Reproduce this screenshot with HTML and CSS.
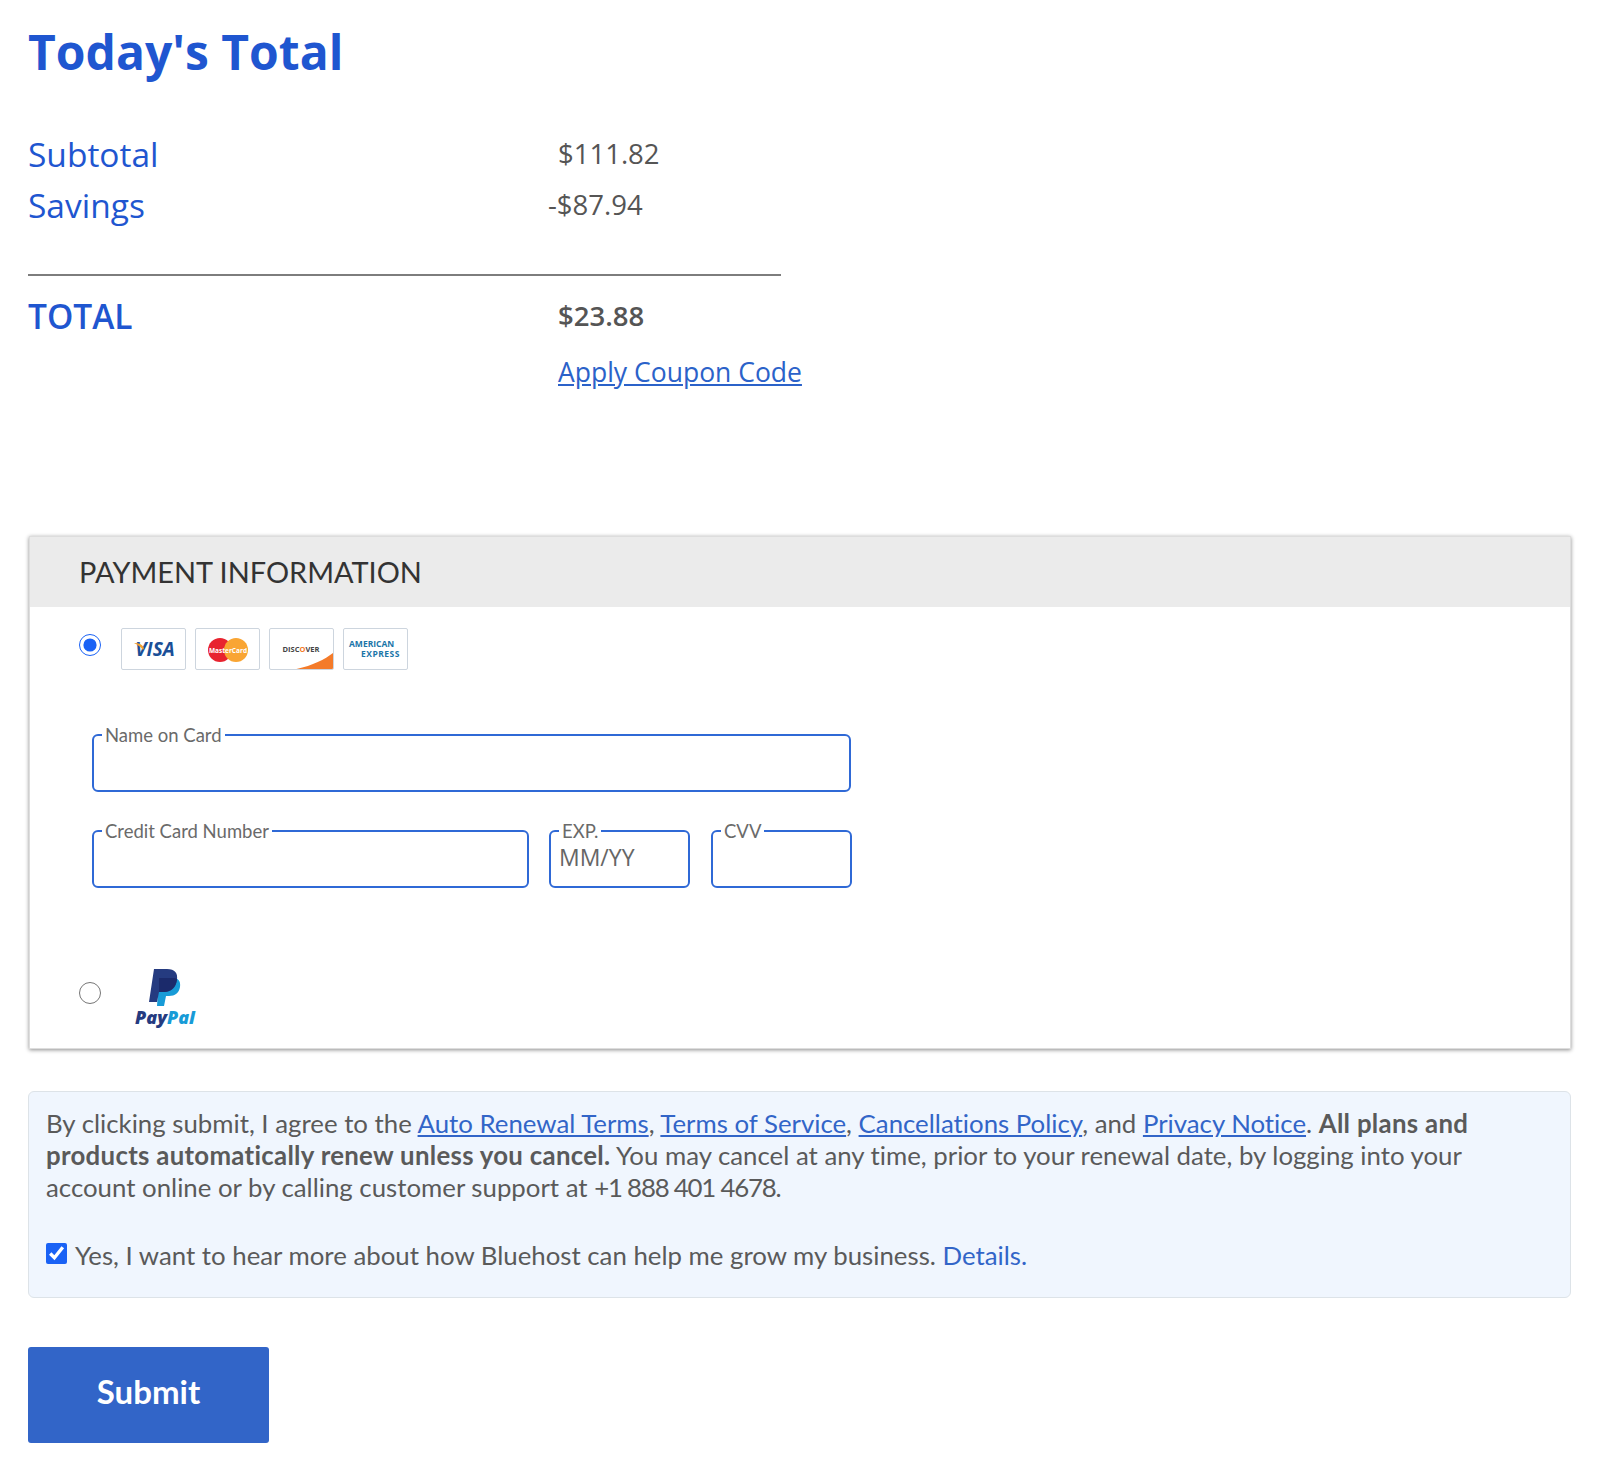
FILE: index.html
```html
<!DOCTYPE html>
<html>
	<head>
		<meta charset="utf-8">
		<title>Checkout</title>
		<link rel="stylesheet" href="styles.css">
	</head>
	<body>
		<div class="page">
			<h1 class="title">Today's Total</h1>
			<div class="totals">
				<div class="row">
					<span class="name">Subtotal</span>
					<span class="val">$111.82</span>
				</div>
				<div class="row">
					<span class="name">Savings</span>
					<span class="val neg">-$87.94</span>
				</div>
				<div class="line"></div>
				<div class="row">
					<span class="name strong">TOTAL</span>
					<span class="val strong-val">$23.88</span>
				</div>
				<div class="row coupon-row">
					<span class="name"></span>
					<a class="coupon" href="javascript:;">Apply Coupon Code</a>
				</div>
			</div>

			<div class="panel">
				<div class="panel-head">PAYMENT INFORMATION</div>
				<div class="method">
					<input class="radio" type="radio" name="pay" checked>
					<div class="cards">
						<div class="card">
							<svg viewBox="0 0 64 42" width="64" height="42">
								<text x="33" y="27" class="visa" text-anchor="middle">VISA</text>
								<path d="M12 14c5 0 8 1 10 5l-1 2c-2-3-5-5-9-7z" fill="#f0a030"/>
							</svg>
						</div>
						<div class="card">
							<svg viewBox="0 0 64 42" width="64" height="42">
								<circle cx="24" cy="21" r="12" fill="#e8232f"/>
								<circle cx="40" cy="21" r="12" fill="#f9a533"/>
								<text x="32" y="23.5" class="mc" text-anchor="middle">MasterCard</text>
							</svg>
						</div>
						<div class="card">
							<svg viewBox="0 0 64 42" width="64" height="42">
								<path d="M21 41C40 38 54 31 63 24v17z" fill="#f47b2a"/>
								<text x="31" y="23" class="disc" text-anchor="middle">DISC<tspan fill="#f47b2a">O</tspan>VER</text>
							</svg>
						</div>
						<div class="card">
							<svg viewBox="0 0 64 42" width="64" height="42">
								<text x="5" y="18" class="amex">AMERICAN</text>
								<text x="56" y="28" class="amex wide" text-anchor="end">EXPRESS</text>
							</svg>
						</div>
					</div>
				</div>

				<div class="fields">
					<fieldset class="field f-name">
						<legend>Name on Card</legend>
					</fieldset>
					<fieldset class="field f-num">
						<legend>Credit Card Number</legend>
					</fieldset>
					<fieldset class="field f-exp">
						<legend>EXP.</legend>
						<span class="ph">MM/YY</span>
					</fieldset>
					<fieldset class="field f-cvv">
						<legend>CVV</legend>
					</fieldset>
				</div>

				<div class="method paypal">
					<input class="radio off" type="radio" name="pay">
					<div class="pp">
						<svg viewBox="0 0 40 38" width="40" height="38">
							<path d="M14 9h14c5 0 8 3 7 9-1 6-5 9-11 9h-3l-2 10H12z" fill="#179bd7"/>
							<path d="M9 0h13c8 0 11 4 10 11-1 8-6 12-13 12h-5l-2 10H4z" fill="#253b80"/>
							<path d="M14 9h14c2 0 3 .5 4 1-1 8-6 13-13 13h-5z" fill="#1b2a6b"/>
						</svg>
						<span class="pp-word"><b>Pay</b><b class="pp-light">Pal</b></span>
					</div>
				</div>
			</div>

			<div class="notice">
				<p>By clicking submit, I agree to the <a href="javascript:;">Auto Renewal Terms</a>, <a href="javascript:;">Terms of Service</a>, <a href="javascript:;">Cancellations Policy</a>, and <a href="javascript:;">Privacy Notice</a>. <b>All plans and products automatically renew unless you cancel.</b> You may cancel at any time, prior to your renewal date, by logging into your account online or by calling customer support at <span class="phone">+1 888 401 4678</span>.</p>
				<label class="optin">
					<input type="checkbox" checked>
					<span>Yes, I want to hear more about how Bluehost can help me grow my business. <a class="plain" href="javascript:;">Details.</a></span>
				</label>
			</div>

			<button class="submit" type="button">Submit</button>
		</div>
	</body>
</html>
```

FILE: styles.css
```css
*{
	margin:0;
	padding:0;
	box-sizing:border-box;
}
body{
	background:#fff;
	color:#555;
	font-family:"Open Sans",sans-serif;
}
.page{
	padding:23px 29px 30px 28px;
}
.title{
	color:#1f56d0;
	font-size:48px;
	line-height:58px;
	font-weight:700;
}
.totals{
	margin-top:47px;
	width:800px;
}
.row{
	display:grid;
	grid-template-columns:530px 1fr;
	height:51px;
	align-items:center;
}
.name{
	color:#1f56d0;
	font-size:33.5px;
}
.strong{
	font-weight:600;
}
.val{
	font-size:27.5px;
	color:#555;
}
.neg{
	margin-left:-10px;
}
.strong-val{
	font-weight:600;
}
.line{
	width:753px;
	height:2px;
	background:#7d7d7d;
	margin:44px 0 14px;
}
.coupon-row{
	margin-top:5px;
}
.coupon{
	color:#2b62c9;
	font-size:26.5px;
}
.panel{
	margin-top:139px;
	margin-left:1px;
	border:1px solid #ddd;
	box-shadow:0 1px 4px rgba(0,0,0,.45);
	height:513px;
}
.panel-head{
	background:#ebebeb;
	height:70px;
	padding-left:49px;
	line-height:70px;
	font-family:Lato,sans-serif;
	font-size:28.9px;
	color:#333;
}
.method{
	display:flex;
	padding:21px 0 0 49px;
	gap:20px;
}
.radio{
	width:22px;
	height:22px;
	margin-top:6px;
	accent-color:#1a62f5;
}
.cards{
	display:flex;
	gap:9px;
}
.card{
	width:65px;
	height:42px;
	border:1px solid #cdd5de;
	border-radius:2px;
	background:#fff;
	overflow:hidden;
}
.card svg{
	display:block;
}
.visa{
	font:italic 700 19px "Open Sans",sans-serif;
	fill:#1a4f97;
}
.mc{
	font:700 6.5px "Open Sans",sans-serif;
	fill:#fff;
}
.disc{
	font:700 7.5px "Open Sans",sans-serif;
	fill:#444;
}
.amex{
	font:700 8.5px "Open Sans",sans-serif;
	fill:#1a75a8;
}
.wide{
	letter-spacing:.5px;
}
.fields{
	display:grid;
	grid-template-columns:437px 141px 141px;
	column-gap:20px;
	row-gap:30px;
	padding:56px 0 0 62px;
	width:830px;
}
.field{
	border:2px solid #2f69d6;
	border-radius:6px;
	height:66px;
	padding:0 8px;
}
.field legend{
	font-family:Lato,sans-serif;
	font-size:18.5px;
	line-height:18px;
	padding:0 3px;
	color:#6a6a6a;
}
.f-name{
	grid-column:1 / span 3;
}
.f-cvv{
	margin:0 -1px 0 1px;
}
.ph{
	display:block;
	font-size:23px;
	line-height:34px;
	color:#666;
}
.paypal{
	padding-top:81px;
	gap:34px;
}
.paypal .radio{
	margin-top:13px;
}
.pp{
	display:flex;
	flex-direction:column;
	align-items:center;
	width:60px;
}
.pp-word{
	font:italic 700 18px "Open Sans",sans-serif;
	color:#253b80;
	line-height:20px;
}
.pp-light{
	color:#179bd7;
}
.notice{
	margin-top:42px;
	background:#f0f6fe;
	border:1px solid #dde3e8;
	border-radius:6px;
	height:207px;
	padding:15px 17px;
	font-family:Lato,sans-serif;
	font-size:25.8px;
	line-height:32px;
	color:#5a5a5a;
	font-variant-ligatures:none;
}
.notice p{
	max-width:1450px;
}
.notice b{
	letter-spacing:.3px;
}
.phone{
	letter-spacing:-1.2px;
}
.notice a{
	color:#3265c8;
}
.notice a.plain{
	text-decoration:none;
}
.optin{
	display:flex;
	align-items:flex-start;
	gap:8px;
	margin-top:36px;
}
.optin input{
	width:21px;
	height:21px;
	margin-top:4px;
	accent-color:#1a62f5;
}
.submit{
	display:block;
	margin-top:49px;
	width:241px;
	height:96px;
	background:#3265c8;
	border:0;
	border-radius:3px;
	padding-bottom:8px;
	color:#fff;
	font-family:Lato,sans-serif;
	font-weight:700;
	font-size:33px;
}
```
